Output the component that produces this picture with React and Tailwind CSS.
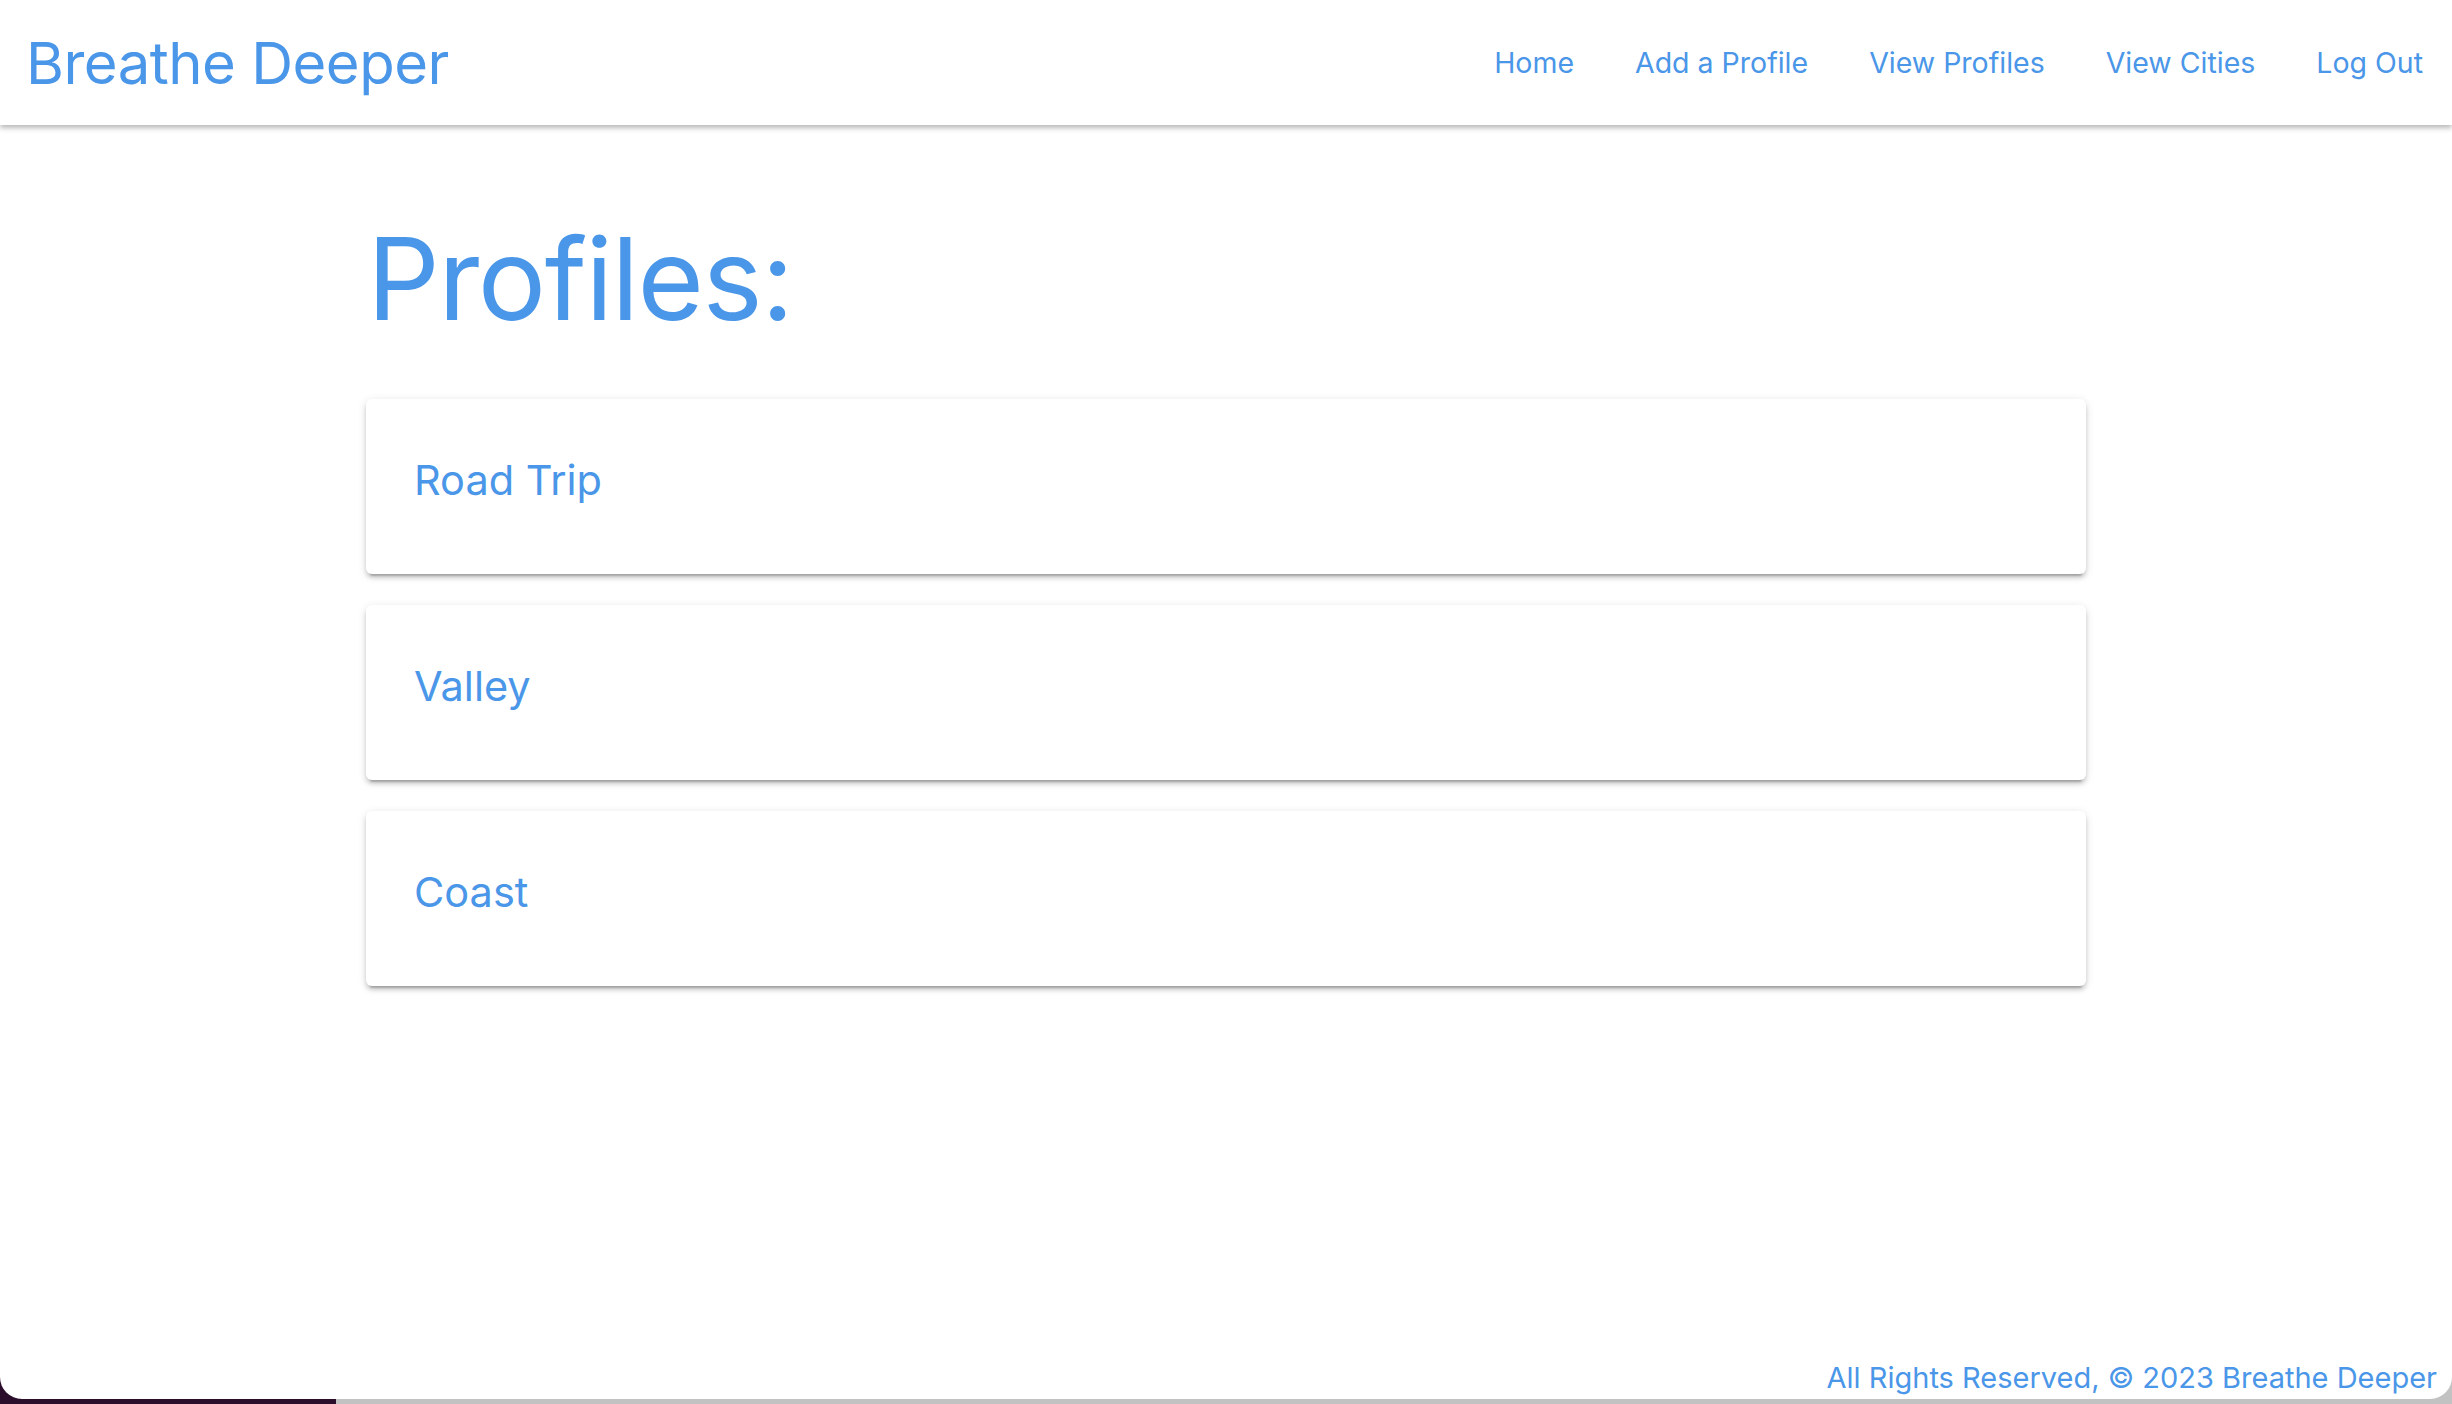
import React from 'react';

const profiles = ['Road Trip', 'Valley', 'Coast'];
const links = ['Home', 'Add a Profile', 'View Profiles', 'View Cities', 'Log Out'];

const ProfileCard = ({ name }) => (
  <div className="h-[175px] flex items-center pl-[48px] bg-white rounded-[6px] shadow-[0_6px_2px_-4px_rgba(0,0,0,0.2),0_4px_4px_0_rgba(0,0,0,0.14),0_2px_10px_0_rgba(0,0,0,0.12)]">
    <span className="text-[41.5px] text-[#4a96e8] -mt-[12px]">{name}</span>
  </div>
);

const App = () => {
  return (
    <div className="h-[1404px] flex flex-col bg-[linear-gradient(to_right,#2b0e2b_336px,#c2c2c2_336px)] font-['Inter','Liberation_Sans',sans-serif]">
      <div className="h-[1399px] flex flex-col bg-white rounded-b-[22px] overflow-hidden">
        {/* Nav bar */}
        <header className="h-[125px] shrink-0 flex items-center justify-between pl-[26px] pr-[29px] bg-white shadow-[0_3px_5px_rgba(0,0,0,0.28)] relative z-10">
          <div className="text-[58px] text-[#4a96e8] tracking-[-0.5px] mt-[2px]">Breathe Deeper</div>
          <nav className="flex gap-[61px] mt-[2px]">
            {links.map((l) => (
              <a key={l} className="text-[28.5px] text-[#4a96e8]">
                {l}
              </a>
            ))}
          </nav>
        </header>

        {/* Content */}
        <main className="w-[1720px] mx-auto flex flex-col">
          <h1 className="mt-[84px] mb-[50px] pl-[1px] text-[114px] leading-[140px] text-[#4a96e8] tracking-[-1.5px]">
            Profiles:
          </h1>
          <div className="flex flex-col gap-[31px]">
            {profiles.map((p) => (
              <ProfileCard key={p} name={p} />
            ))}
          </div>
        </main>

        <footer className="mt-auto pr-[15px] text-right text-[29px] text-[#4a96e8]">
          All Rights Reserved, © 2023 Breathe Deeper
        </footer>
      </div>
    </div>
  );
};

export default App;
